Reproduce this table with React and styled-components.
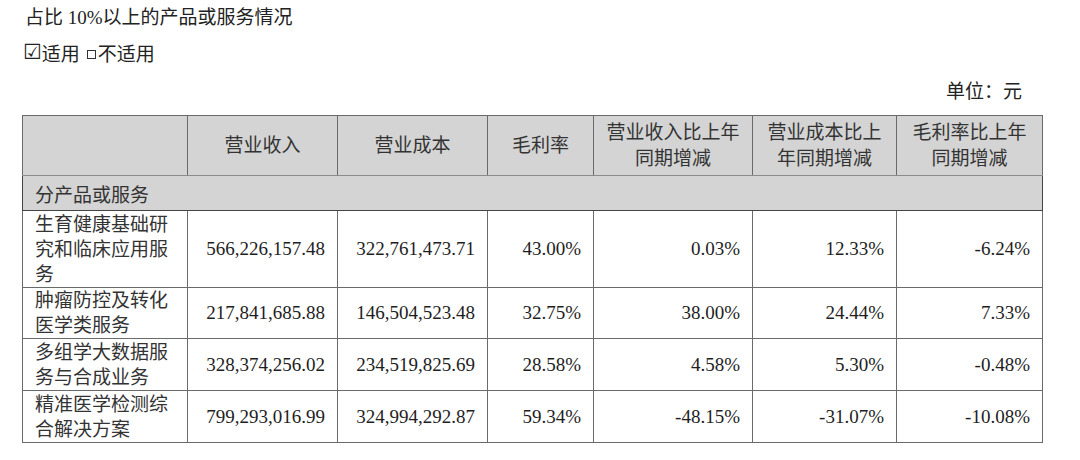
import React from "react";
import styled, { createGlobalStyle } from "styled-components";

const GlobalStyle = createGlobalStyle`
  html, body {
    margin: 0;
    padding: 0;
    background: #ffffff;
  }
  body {
    font-family: "Liberation Serif", "Noto Sans CJK SC", serif;
    color: #222;
  }
`;

const Strings = {
  title: "占比 10%以上的产品或服务情况",
  applicable: "适用",
  notApplicable: "不适用",
  unit: "单位：元",
  category: "分产品或服务",
};

const headers = [
  "",
  "营业收入",
  "营业成本",
  "毛利率",
  "营业收入比上年同期增减",
  "营业成本比上年同期增减",
  "毛利率比上年同期增减",
];

// widths of the seven columns, px
const colWidths = [165, 150, 150, 106, 159, 144, 146];

const rows = [
  {
    name: "生育健康基础研究和临床应用服务",
    height: 77,
    values: ["566,226,157.48", "322,761,473.71", "43.00%", "0.03%", "12.33%", "-6.24%"],
  },
  {
    name: "肿瘤防控及转化医学类服务",
    height: 51,
    values: ["217,841,685.88", "146,504,523.48", "32.75%", "38.00%", "24.44%", "7.33%"],
  },
  {
    name: "多组学大数据服务与合成业务",
    height: 52,
    values: ["328,374,256.02", "234,519,825.69", "28.58%", "4.58%", "5.30%", "-0.48%"],
  },
  {
    name: "精准医学检测综合解决方案",
    height: 52,
    values: ["799,293,016.99", "324,994,292.87", "59.34%", "-48.15%", "-31.07%", "-10.08%"],
  },
];

const App = () => (
  <>
    <GlobalStyle />
    <Page>
      <Title>{Strings.title}</Title>
      <CheckLine>
        <CheckedBox>☑</CheckedBox>
        <span>{Strings.applicable}</span>
        <EmptyBox />
        <span>{Strings.notApplicable}</span>
      </CheckLine>
      <UnitLine>{Strings.unit}</UnitLine>
      <Table>
        <colgroup>
          {colWidths.map((w, i) => (
            <col key={i} style={{ width: w }} />
          ))}
        </colgroup>
        <thead>
          <HeadRow>
            {headers.map((h, i) => (
              <HeadCell key={i}>{h}</HeadCell>
            ))}
          </HeadRow>
        </thead>
        <tbody>
          <CategoryRow>
            <CategoryCell colSpan={7}>{Strings.category}</CategoryCell>
          </CategoryRow>
          {rows.map((r) => (
            <BodyRow key={r.name} $h={r.height}>
              <NameCell>{r.name}</NameCell>
              {r.values.map((v, i) => (
                <NumCell key={i}>{v}</NumCell>
              ))}
            </BodyRow>
          ))}
        </tbody>
      </Table>
    </Page>
  </>
);

const Page = styled.div`
  width: 1020px;
  margin-left: 22px;
  font-size: 19px;
`;

const Title = styled.div`
  height: 36px;
  line-height: 36px;
  padding-left: 3px;
  color: #222;
`;

const CheckLine = styled.div`
  height: 32px;
  display: flex;
  align-items: center;
  padding-left: 1px;
  color: #222;
`;

const CheckedBox = styled.span`
  font-family: "DejaVu Sans", sans-serif;
  font-size: 21px;
  line-height: 1;
  margin-right: 0;
  color: #222;
`;

const EmptyBox = styled.span`
  display: inline-block;
  width: 7px;
  height: 7px;
  border: 1px solid #333;
  margin: 4px 2px 0 7px;
`;

const UnitLine = styled.div`
  height: 47px;
  line-height: 48px;
  text-align: right;
  padding-right: 20px;
  color: #222;
`;

const Table = styled.table`
  width: 1020px;
  table-layout: fixed;
  border-collapse: collapse;
  border: 1px solid #5a5a5a;
  border-top-color: #9a9a9a;
  color: #222;
`;

const HeadRow = styled.tr`
  height: 60px;
  background: #d4d4d4;
`;

const HeadCell = styled.th`
  font-weight: normal;
  text-align: center;
  vertical-align: middle;
  padding: 0 12px;
  line-height: 26px;
  color: #333;
  border: 1px solid #6a6a6a;
  border-bottom-color: #8c8c8c;
`;

const CategoryRow = styled.tr`
  height: 35px;
  background: #d4d4d4;
`;

const CategoryCell = styled.td`
  padding: 0 12px;
  text-align: left;
  vertical-align: middle;
  color: #333;
  border: 1px solid #444;
`;

const BodyRow = styled.tr`
  height: ${({ $h }) => $h}px;
`;

const NameCell = styled.td`
  padding: 0 12px;
  line-height: 25px;
  text-align: left;
  vertical-align: middle;
  color: #333;
  border: 1px solid #6a6a6a;
`;

const NumCell = styled.td`
  padding: 0 12px;
  text-align: right;
  vertical-align: middle;
  white-space: nowrap;
  color: #1e1e1e;
  border: 1px solid #6a6a6a;
`;

export default App;
